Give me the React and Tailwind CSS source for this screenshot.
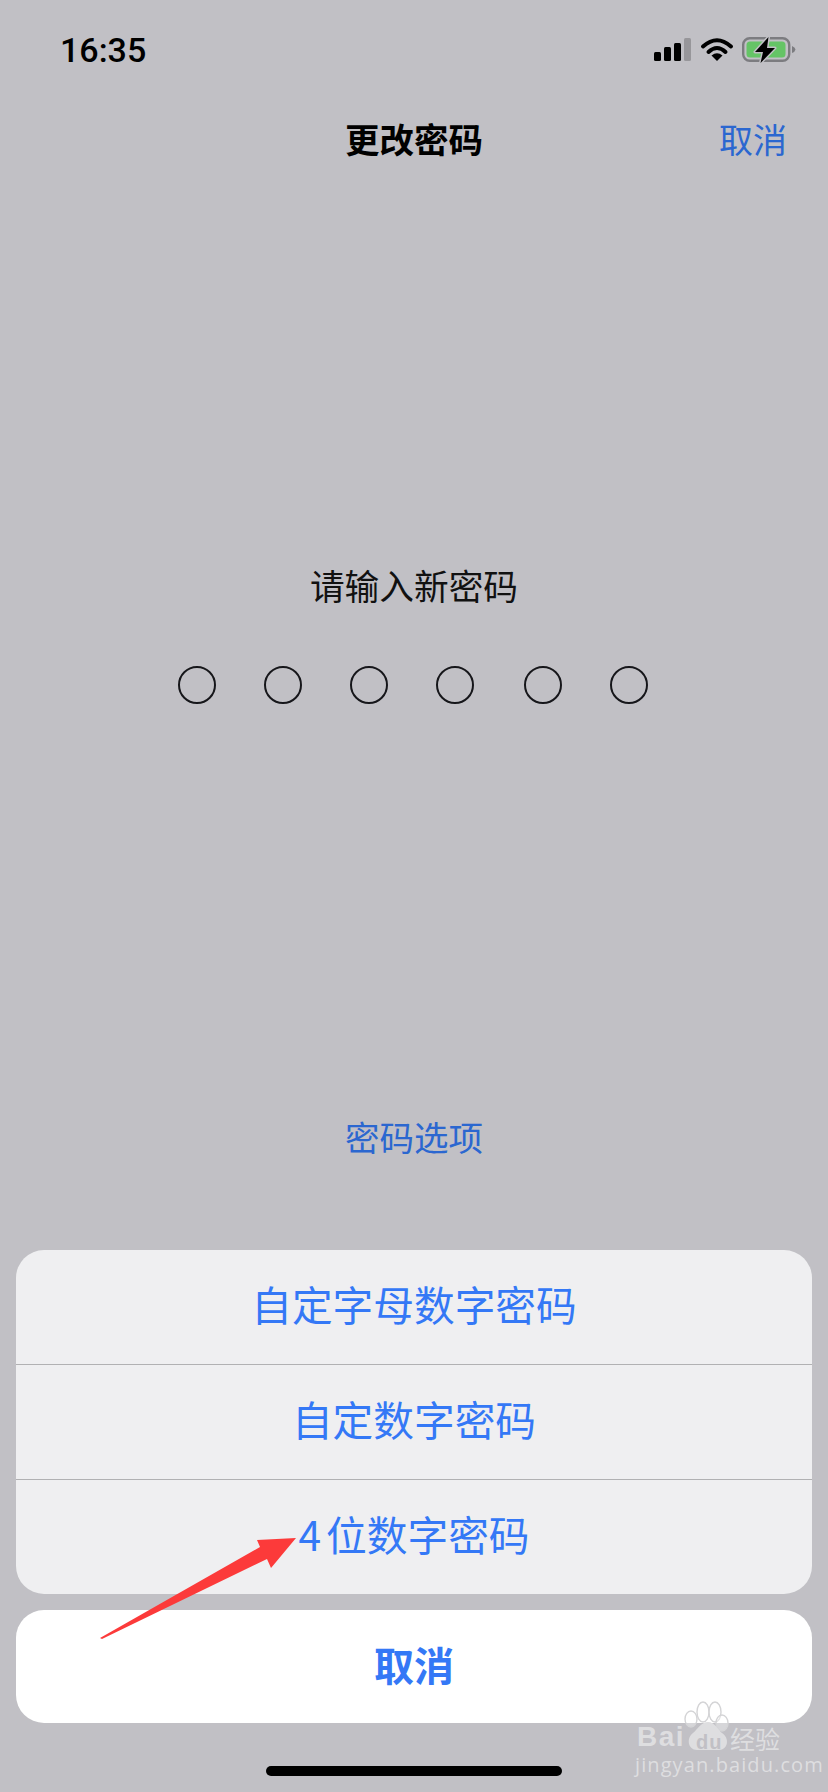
const CJK = { fontFamily: '"Noto Sans CJK SC", "Liberation Sans", sans-serif' };

function StatusIcons() {
  return (
    <svg width="142" height="28" viewBox="0 0 142 28" className="block overflow-visible">
      <rect x="0" y="15" width="7" height="9" rx="1.5" fill="#000" />
      <rect x="10" y="10" width="7" height="14" rx="1.5" fill="#000" />
      <rect x="20" y="6" width="7" height="18" rx="1.5" fill="#000" />
      <rect x="30" y="1" width="7" height="23" rx="1.5" fill="#97969a" />
      <path d="M49 9.5 Q63 -3 77 9.5" fill="none" stroke="#000" strokeWidth="4" strokeLinecap="round" />
      <path d="M54.5 15 Q63 7 71.5 15" fill="none" stroke="#000" strokeWidth="4" strokeLinecap="round" />
      <path d="M57.5 18.5 L63 24 L68.5 18.5 Q63 14 57.5 18.5 Z" fill="#000" />
      <rect x="89.2" y="1.2" width="46" height="22.6" rx="6.5" fill="none" stroke="#7c7c80" strokeWidth="2.4" />
      <rect x="92.5" y="4.5" width="39" height="16" rx="3.5" fill="#65c466" />
      <path d="M138 9 Q141 10 141.5 12.5 Q141 15 138 16 Z" fill="#7c7c80" />
      <path d="M114.5 0 L101 15 H109 L106.5 26 L121 11 H113 Z" fill="#000" stroke="#c1c0c5" strokeWidth="3" strokeLinejoin="round" paintOrder="stroke" />
    </svg>
  );
}

function Circle() {
  return <div className="w-[38px] h-[38px] rounded-full border-2 border-[#16161a] shrink-0" />;
}

function Circle2() {
  return <div className="ml-[48px]"><Circle /></div>;
}

function SheetRow({ children, last }) {
  return (
    <div className={"flex items-center justify-center text-[40.7px] leading-none text-[#3478f6] pb-[5px]" + (last ? " h-[114px]" : " h-[115px] border-b border-[#b1b1b3]")}>
      {children}
    </div>
  );
}

function Watermark() {
  return (
    <div className="absolute left-[634px] top-[1700px] w-[152px] h-[76px] text-[#dedee0]">
      <svg width="60" height="52" viewBox="0 0 60 52" className="absolute left-[50px] top-0">
        <g fill="#ffffff" fillOpacity="0.35" stroke="#d4d4d6" strokeWidth="1.4">
          <ellipse cx="7" cy="19" rx="6" ry="8" />
          <ellipse cx="19" cy="12" rx="6" ry="10" />
          <ellipse cx="31" cy="12" rx="6" ry="10" />
          <ellipse cx="38" cy="23" rx="6" ry="8" />
        </g>
        <path d="M24 22 C31 22 33 29 38 33 C46 38 44 50 35 50 H13 C4 50 2 38 9 33 C14 29 17 22 24 22 Z" fill="#dedee0" />
      </svg>
      <div className="absolute left-[3px] top-[23px] text-[28px] leading-[28px] font-bold tracking-[1.5px]" style={{ fontFamily: '"Liberation Sans", sans-serif' }}>
        Bai
      </div>
      <div className="absolute left-[62px] top-[31px] text-[20px] leading-[22px] font-bold tracking-[1px] text-[#c1c0c5]" style={{ fontFamily: '"Liberation Sans", sans-serif' }}>
        du
      </div>
      <div className="absolute left-[96px] top-[25px] text-[25px] leading-[26px] whitespace-nowrap" style={CJK}>
        经验
      </div>
      <div className="absolute left-[1px] top-[54px] text-[20px] leading-[22px] tracking-[1.1px] whitespace-nowrap" style={{ fontFamily: '"Open Sans", sans-serif' }}>
        jingyan.baidu.com
      </div>
    </div>
  );
}

export default function App() {
  return (
    <div className="relative w-[828px] h-[1792px] overflow-hidden bg-[#c1c0c5] flex flex-col" style={CJK}>
      <div className="h-[100px] pt-[30px] pl-[60px] pr-[32px] flex items-start justify-between">
        <div className="text-[34px] leading-[40px] text-black font-medium" style={{ fontFamily: 'Roboto, "Liberation Sans", sans-serif' }}>
          16:35
        </div>
        <div className="pt-[7px]">
          <StatusIcons />
        </div>
      </div>

      <div className="h-[80px] grid grid-cols-[1fr_auto_1fr] items-center px-[43px] pb-[3px]">
        <div />
        <div className="text-[34.5px] leading-none font-bold text-black">更改密码</div>
        <div className="text-right text-[34px] leading-none text-[#2b67d0] -mr-[2px]">取消</div>
      </div>

      <div className="mt-[384px] text-center text-[34.7px] leading-[42px] text-[#111]">请输入新密码</div>

      <div className="mt-[60px] flex justify-center pr-[2px]">
        <Circle />
        <Circle2 />
        <Circle2 />
        <Circle2 />
        <div className="ml-[50px]"><Circle /></div>
        <Circle2 />
      </div>

      <div className="mt-[412px] text-center text-[34.5px] leading-[40px] text-[#2b67d0]">密码选项</div>

      <div className="mt-[94px] mx-4 rounded-[28px] bg-[#efeff1] overflow-hidden">
        <SheetRow>自定字母数字密码</SheetRow>
        <SheetRow>自定数字密码</SheetRow>
        <SheetRow last>
          <span>4<span className="ml-[5px]">位数字密码</span></span>
        </SheetRow>
      </div>

      <div className="mt-[16px] mx-4 h-[113px] pb-[5px] rounded-[28px] bg-white flex items-center justify-center text-[40px] leading-none font-bold text-[#3478f6]">
        取消
      </div>

      <div className="mt-[43px] mx-auto w-[296px] h-[10px] rounded-full bg-black" />

      <svg width="828" height="1792" viewBox="0 0 828 1792" className="absolute left-0 top-0 pointer-events-none">
        <polygon points="100,1638 260,1547 257,1540 296,1538 271,1568 267,1559 102,1639" fill="#fc3a3a" />
      </svg>

      <Watermark />
    </div>
  );
}
